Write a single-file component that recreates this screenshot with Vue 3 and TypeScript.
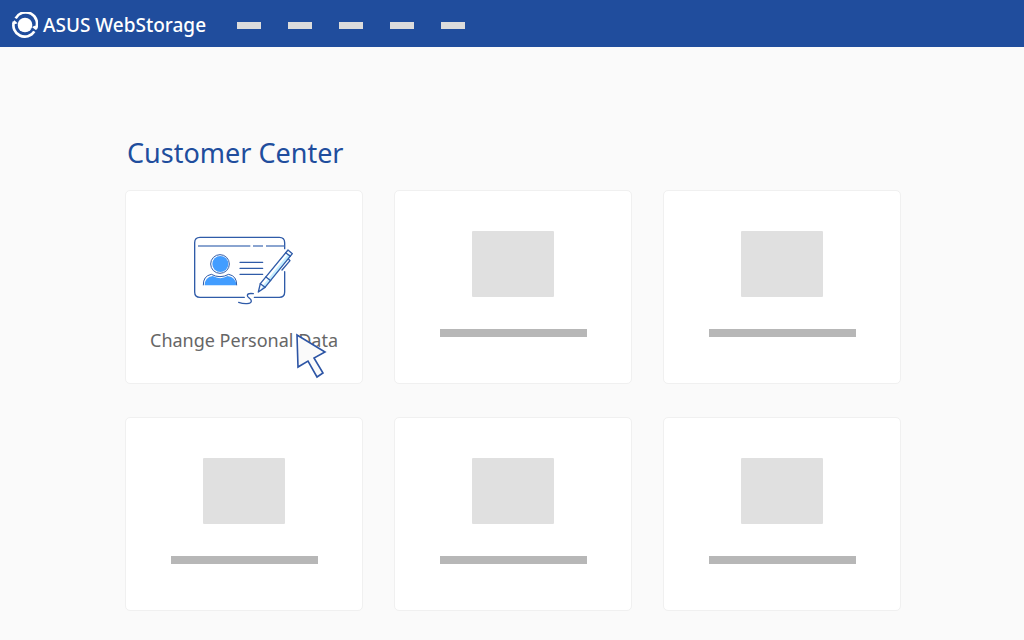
<script setup lang="ts">
interface Tile {
  id: number
  label: string | null
}

const navItems: string[] = ['Section 1', 'Section 2', 'Section 3', 'Section 4', 'Section 5']

const tiles: Tile[] = [
  { id: 1, label: 'Change Personal Data' },
  { id: 2, label: null },
  { id: 3, label: null },
  { id: 4, label: null },
  { id: 5, label: null },
  { id: 6, label: null },
]
</script>

<template>
  <div class="page">
    <header class="topbar">
      <a class="brand" href="#">
        <svg class="logo" viewBox="0 0 78 78" aria-hidden="true">
          <circle cx="39" cy="39" r="22" fill="#fff" />
          <g fill="none" stroke="#fff" stroke-width="8">
            <path d="M11 19A34 34 0 0 1 71 51" />
            <path d="M67 58A34 34 0 0 1 6 29" />
          </g>
          <path d="M0 35L7 25L17 34L10 36Z" fill="#fff" />
          <path d="M60 45L71 54L78 43L68 41Z" fill="#fff" />
          <path d="M58 50L64 56" fill="none" stroke="#204d9d" stroke-width="3" />
        </svg>
        <span>ASUS WebStorage</span>
      </a>
      <nav class="nav" aria-label="Main">
        <a v-for="item in navItems" :key="item" class="nav-item" href="#" :aria-label="item"></a>
      </nav>
    </header>

    <main class="content">
      <h1 class="title">Customer Center</h1>
      <div class="grid">
        <a
          v-for="tile in tiles"
          :key="tile.id"
          class="card"
          href="#"
          :aria-label="tile.label ?? `Option ${tile.id}`"
        >
          <template v-if="tile.label">
            <svg class="id-icon" viewBox="15 12 324 228" aria-hidden="true">
              <g fill="none" stroke="#2f5ba8" stroke-width="4" stroke-linecap="round" stroke-linejoin="round">
                <path d="M178 208H45Q29 208 29 192V44Q29 28 45 28H283Q299 28 299 44V62" />
                <path d="M299 131V192Q299 208 283 208H208" />
                <path d="M161 223C177 229 199 229 199 219C199 211 186 209 187 202C188 196 198 196 205 197" />
                <path d="M165 103H233M165 121H233M165 139H233" />
              </g>
              <path d="M39 54H196M204 54H234M243 54H298" fill="none" stroke="#6486c1" stroke-width="4" />
              <circle cx="106" cy="108" r="24" fill="#429dff" />
              <circle cx="105" cy="108" r="28" fill="none" stroke="#2f5ba8" stroke-width="3" />
              <path d="M59 172Q59 148 83 144Q106 157 128 144Q153 148 154 172Z" fill="#429dff" />
              <path d="M55 172Q54 144 79 139Q105 153 131 139Q156 144 155 172" fill="none" stroke="#2f5ba8" stroke-width="3" />
              <path d="M226 167L309 66L322 77L240 178L220 192Z" fill="#fff" />
              <path d="M310 77L319 81L240 178L225 188L235 171Z" fill="#c4eeff" />
              <g fill="none" stroke="#2f5ba8" stroke-width="4" stroke-linecap="round" stroke-linejoin="round">
                <path d="M309 66L322 77L240 178L220 192L226 167Z" />
                <path d="M226 167L240 178M243 147L257 158M302 74L316 85" />
                <path d="M311 94L315 98L291 126" />
              </g>
            </svg>
            <span class="label">{{ tile.label }}</span>
          </template>
          <template v-else>
            <span class="thumb"></span>
            <span class="line"></span>
          </template>
          <svg v-if="tile.label" class="pointer" viewBox="0 0 32 46" aria-hidden="true">
            <path
              d="M2 2L30 19L19 25L28 40L22 44L13 28L3 34Z"
              fill="#fafafa"
              stroke="#2d55a5"
              stroke-width="1.6"
            />
          </svg>
        </a>
      </div>
    </main>
  </div>
</template>

<style>
body {
  margin: 0;
  background: #fafafa;
}
</style>

<style scoped>
.page {
  min-height: 100vh;
  box-sizing: border-box;
  padding-bottom: 28px;
  background: #fafafa;
  font-family: "Noto Sans", "Open Sans", sans-serif;
}

.topbar {
  display: flex;
  align-items: center;
  gap: 31px;
  min-height: 47px;
  box-sizing: border-box;
  padding: 2px 12px 0;
  background: #204d9d;
}

.brand {
  display: flex;
  align-items: center;
  gap: 5px;
  color: #fff;
  font-size: 19px;
  font-weight: 500;
  line-height: 28px;
  text-decoration: none;
  white-space: nowrap;
}

.logo {
  width: 26px;
  height: 26px;
}

.nav {
  display: flex;
  gap: 27px;
  padding-top: 2px;
}

.nav-item {
  width: 24px;
  height: 7px;
  background: #dcdcdc;
}

.content {
  max-width: 776px;
  margin: 0 auto;
  padding: 88px 0 0 2px;
}

.title {
  margin: 0 0 19px;
  padding-left: 2px;
  color: #204d9d;
  font-size: 27px;
  font-weight: 400;
  line-height: 36px;
}

.grid {
  display: grid;
  grid-template-columns: repeat(3, 1fr);
  gap: 33px 31px;
}

.card {
  position: relative;
  display: flex;
  flex-direction: column;
  align-items: center;
  box-sizing: border-box;
  min-height: 194px;
  padding: 40px 0 24px;
  border: 1px solid #f0f0f0;
  border-radius: 5px;
  background: #fff;
  color: #666;
  text-decoration: none;
}

.thumb {
  width: 82px;
  height: 66px;
  margin-bottom: 32px;
  border-radius: 1px;
  background: #e0e0e0;
}

.line {
  width: 147px;
  height: 8px;
  background: #b7b7b7;
}

.id-icon {
  width: 108px;
  height: 76px;
  margin: 1px 0 18px;
}

.label {
  font-size: 18px;
  line-height: 28px;
  white-space: nowrap;
}

.pointer {
  position: absolute;
  top: 142px;
  left: 169px;
  width: 32px;
  height: 46px;
}
</style>
